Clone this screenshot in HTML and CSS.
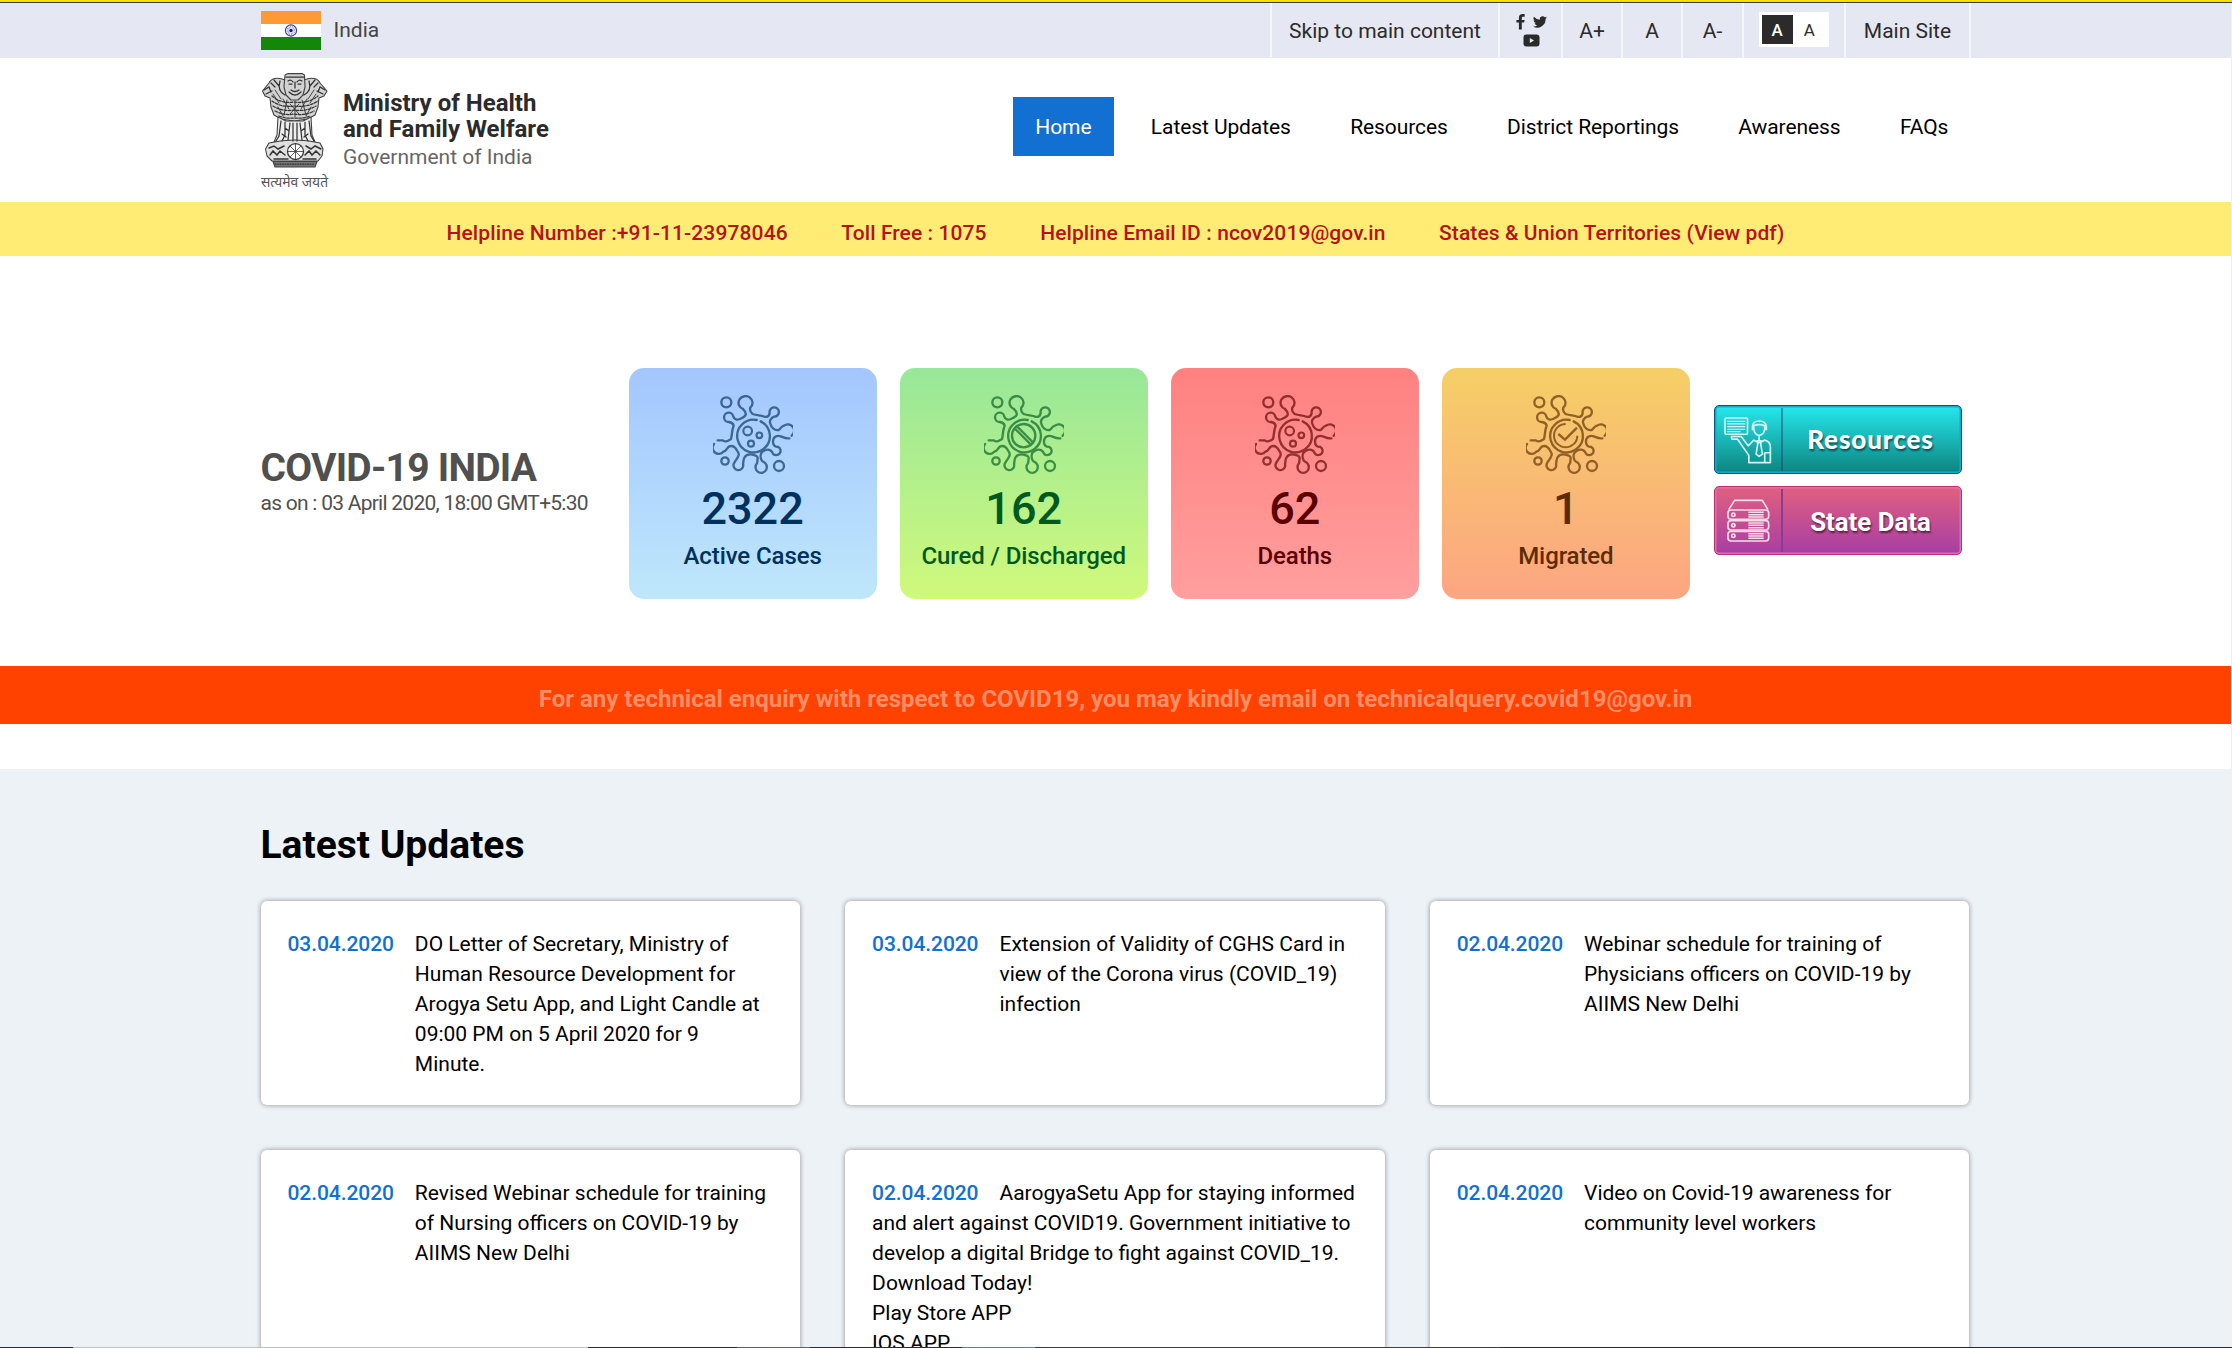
FILE: index.html
```html
<!DOCTYPE html>
<html lang="en">
<head>
<meta charset="utf-8">
<title>Ministry of Health and Family Welfare</title>
<link rel="stylesheet" href="styles.css">
</head>
<body>
<svg class="defs" aria-hidden="true">
  <defs>
    <symbol id="virus" viewBox="39 30 240 240">
      <g fill="none" stroke="currentColor" stroke-width="7" stroke-linecap="round">
        <path d="M129 72A21 20 0 1 1 151 68C148 78 154 84 158 87C172 92 184 90 193 95C202 98 208 92 209 84A14 14 0 1 1 223 95C214 98 207 106 211 116C214 128 224 138 236 135C242 132 241 125 252 122A18 18 0 0 1 275 152"/>
        <path d="M268 160C258 162 250 157 243 154C230 150 218 156 219 172C220 182 228 186 235 186A13 13 0 1 1 219 206C214 192 202 192 192 197C180 203 180 216 185 226C188 231 193 231 196 235A17 17 0 1 1 171 235C173 224 176 213 165 211C150 206 138 208 133 218C129 226 131 231 129 237A14.500 14.500 0 1 1 103 233C109 222 123 210 112 198C106 186 98 181 88 184C80 188 82 197 70 200A18 18 0 0 1 42 177"/>
        <path d="M53 166H68C75 174 84 167 93 162C97 148 95 135 101 122C99 113 93 112 87 111A14 14 0 1 1 100 95C103 104 111 106 120 102C132 97 141 91 136 82C135 77 131 76 129 72"/>
        <circle cx="79" cy="52" r="15"/><circle cx="75" cy="228" r="11"/><circle cx="237" cy="243" r="15"/>
        <path d="M170 105A49 49 0 1 0 182 109"/>
      </g>
    </symbol>
  </defs>
</svg>

<div class="strip"></div>
<div class="page">
  <div class="topbar">
    <div class="container topbar-row">
      <div class="country">
        <svg class="flag" viewBox="0 0 60 39">
          <rect width="60" height="39" fill="#fff"/><rect width="60" height="13" fill="#ff9933"/><rect y="26" width="60" height="13" fill="#138808"/>
          <circle cx="30" cy="19.500" r="5.600" fill="none" stroke="#3c3c9c" stroke-width="1.100"/>
          <circle cx="30" cy="19.500" r="3.400" fill="none" stroke="#8a8ac6" stroke-width="2.400" stroke-dasharray=".7 .8"/>
          <circle cx="30" cy="19.500" r="1.700" fill="#15157c"/>
        </svg>
        <span>India</span>
      </div>
      <div class="tools">
        <a>Skip to main content</a>
        <div class="social">
          <svg width="9" height="16" viewBox="0 0 9 16"><path fill="#2b2b2b" d="M8.700.3v2.500H7.200c-1.200 0-1.400.6-1.400 1.400v1.700h2.800l-.4 2.600H5.800V15.500H2.900V8.500H.4V5.900h2.500V3.800C2.900 1.400 4.400.1 6.600.1c1 0 1.800.1 2.100.2z"/></svg>
          <svg width="14" height="12" viewBox="0 0 24 20"><path fill="#2b2b2b" d="M24 2.400a10 10 0 0 1-2.800.8A5 5 0 0 0 23.300.5a10 10 0 0 1-3.100 1.200A4.900 4.900 0 0 0 11.800 6.200 14 14 0 0 1 1.700 1a4.900 4.900 0 0 0 1.500 6.600A5 5 0 0 1 1 7v.1a4.900 4.900 0 0 0 3.900 4.800 5 5 0 0 1-2.200.1 4.900 4.900 0 0 0 4.600 3.400A10 10 0 0 1 0 17.500 14 14 0 0 0 21.500 5z"/></svg>
          <svg width="17" height="13" viewBox="0 0 17 13"><rect x=".5" y=".5" width="16" height="12" rx="3" fill="#2b2b2b"/><path d="M6.800 4v5l4.200-2.500z" fill="#e5e7f3"/></svg>
        </div>
        <a>A+</a><a>A</a><a>A-</a>
        <div class="contrast"><span class="swatches"><b>A</b><i>A</i></span></div>
        <a>Main Site</a>
      </div>
    </div>
  </div>

  <header class="container header">
    <div class="brand">
      <svg class="emblem" viewBox="0 0 67 114">
        <g fill="#d2d2d2" stroke="#404040" stroke-width="1.100" stroke-linejoin="round">
          <path d="M24 7C17 4 10 5 8 10L1.500 18L4 23L9 25L10 34L13 42L20 46L33 48L47 46L54 42L57 34L58 25L63 23L66 18L59 10C57 5 50 4 43 7Z"/>
          <path fill="#eee" d="M17 44L16 62L13 69H54L51 62L50 44L42 48H25Z"/>
          <path d="M24 2L27 .6H41L43.500 2L44 14L42 22L37 27H30L25 22L23 14Z"/>
          <path fill="#e0e0e0" d="M8 70Q34 64 59 70L62 76L61 83L57 88H11L6 83L4.500 76Z"/>
          <path fill="#777" d="M12 88.500H56L54 94H14Z"/>
        </g>
        <g fill="none" stroke="#333" stroke-width="1.250" stroke-linecap="round">
          <path d="M25 4H43M27 8Q30 6 32 9M36 9Q38 6 41 8M28 11H31M37 11H40M34 9V15M30 17Q34 20 38 17M28 19Q34 25 40 19M31 21Q34 23 37 21"/>
          <path d="M3 17L8 14L10 19M5 21L11 18M10 10L14 14M13 7L18 13M64 17L59 14L57 19M62 21L56 18M57 10L53 14M54 7L49 13M19 8Q16 18 24 22M48 8Q51 18 43 22"/>
          <path stroke-dasharray="2.500 1.500" d="M11 23Q20 31 33 29Q47 31 57 23M11 28Q21 35 33 33Q46 35 57 28M12 33Q22 39 33 37Q45 39 55 33M14 38Q24 43 33 41Q44 43 53 38M18 43Q26 46 33 45Q42 46 49 43"/>
          <path stroke-width=".9" d="M14 17L20 26M12 21L18 30M22 26L28 36M26 27L23 42M34 28V44M41 27L45 42M46 26L40 36M53 17L47 26M55 21L49 30M17 34L22 43M50 34L45 43M29 31L38 41M38 31L29 41"/>
          <path d="M20 48L18 63L15 68M24 49V62L21 68M29 50L27 67M32 50V68M36 50V68M39 50L41 67M44 49V62L47 68M48 48L50 63L53 68M24 55L28 58M40 58L44 55M21 61L25 64M43 64L47 61"/>
          <circle cx="34.500" cy="78.500" r="8" fill="#fff"/>
          <path stroke-width=".8" d="M34.500 71V86M27 78.500H42M29.200 73.200L39.800 83.800M29.200 83.800L39.800 73.200"/>
          <path stroke-width="1.500" d="M8 75L13 73L17 76L23 73M9 82L12 78L16 82L19 78L24 82M45 73L50 76L54 73L60 76M44 82L48 78L51 82L55 78L59 82M13 86H27M42 86H55"/>
          <path stroke-dasharray="1 1.500" d="M14 91H54"/>
        </g>
        <text x="0" y="113.500" textLength="67" lengthAdjust="spacingAndGlyphs" class="motto">सत्यमेव जयते</text>
      </svg>
      <div class="brand-text">
        <strong>Ministry of Health</strong>
        <strong>and Family Welfare</strong>
        <span>Government of India</span>
      </div>
    </div>
    <nav class="nav">
      <a class="active">Home</a><a>Latest Updates</a><a>Resources</a><a>District Reportings</a><a>Awareness</a><a>FAQs</a>
    </nav>
  </header>

  <div class="helpline">
    <span>Helpline Number :+91-11-23978046</span>
    <span>Toll Free : 1075</span>
    <span>Helpline Email ID : ncov2019@gov.in</span>
    <span>States &amp; Union Territories (View pdf)</span>
  </div>

  <section class="container stats">
    <div class="stats-title">
      <h1>COVID-19 INDIA</h1>
      <p>as on : 03 April 2020, 18:00 GMT+5:30</p>
    </div>
    <div class="stat blue">
      <svg class="virus" viewBox="39 30 240 240"><use href="#virus" x="39" y="30" width="240" height="240"/><g fill="none" stroke="currentColor" stroke-width="6.500"><circle cx="143" cy="138" r="13"/><circle cx="178" cy="151" r="8.500"/><circle cx="153" cy="176" r="9"/></g></svg>
      <strong>2322</strong><span>Active Cases</span>
    </div>
    <div class="stat green">
      <svg class="virus" viewBox="39 30 240 240"><use href="#virus" x="39" y="30" width="240" height="240"/><g fill="none" stroke="currentColor" stroke-width="7"><circle cx="158" cy="152" r="35"/><path d="M130 129L179 178M137 123L185 171"/></g></svg>
      <strong>162</strong><span>Cured / Discharged</span>
    </div>
    <div class="stat red">
      <svg class="virus" viewBox="39 30 240 240"><use href="#virus" x="39" y="30" width="240" height="240"/><g fill="none" stroke="currentColor" stroke-width="6.500"><circle cx="143" cy="138" r="13"/><circle cx="178" cy="151" r="8.500"/><circle cx="153" cy="176" r="9"/></g></svg>
      <strong>62</strong><span>Deaths</span>
    </div>
    <div class="stat orange">
      <svg class="virus" viewBox="39 30 240 240"><use href="#virus" x="39" y="30" width="240" height="240"/><g fill="none" stroke="currentColor" stroke-width="6"><path d="M158 117A35 35 0 1 0 193 152"/><path d="M136 147L156 164L192 128" stroke-width="7"/></g></svg>
      <strong>1</strong><span>Migrated</span>
    </div>
    <div class="links">
      <a class="link teal">
        <span class="link-icon"><svg width="48" height="48" viewBox="100 75 145 145"><g fill="none" stroke="#d3f6f6" stroke-width="5" stroke-linejoin="round"><rect x="103" y="81" width="68" height="49" rx="3"/><path d="M110 91H164M110 99H164M110 107H164M110 115H164M110 122H150" stroke-width="3.500"/><path d="M122 137H152L173 165L190 148L206 156L222 148Q240 152 240 168V216H175V194L141 145H124Z"/><path d="M190 104V114Q192 132 206 134Q221 132 223 114V104Q206 98 190 104ZM186 118V106Q187 90 206 90Q226 90 228 106V118M206 134V150M200 150H213L211 160L216 190L206 197L197 190L202 160ZM222 186H240M223 187V216"/></g></svg></span>
        <span class="link-label res">Resources</span>
      </a>
      <a class="link pink">
        <span class="link-icon"><svg width="44" height="44" viewBox="107 328 132 132"><g fill="none" stroke="#f7dce9" stroke-width="5" stroke-linejoin="round"><path d="M115 360L133 332H216L233 360"/><rect x="113" y="361" width="122" height="28" rx="9"/><rect x="113" y="393" width="122" height="28" rx="9"/><rect x="113" y="425" width="122" height="29" rx="9"/><circle cx="129" cy="375" r="5"/><circle cx="129" cy="407" r="5"/><circle cx="129" cy="438" r="5"/><path stroke-width="4.500" d="M174 368H220M174 375H220M174 382H220M174 400H220M174 407H220M174 414H220M174 432H220M174 439H220M174 446H220"/></g></svg></span>
        <span class="link-label">State Data</span>
      </a>
    </div>
  </section>

  <div class="notice">For any technical enquiry with respect to COVID19, you may kindly email on technicalquery.covid19@gov.in</div>

  <section class="updates">
    <div class="container">
      <h2>Latest Updates</h2>
      <div class="cards">
        <article class="card"><time>03.04.2020</time><p>DO Letter of Secretary, Ministry of Human Resource Development for Arogya Setu App, and Light Candle at 09:00 PM on 5 April 2020 for 9 Minute.</p></article>
        <article class="card"><time>03.04.2020</time><p>Extension of Validity of CGHS Card in view of the Corona virus (COVID_19) infection</p></article>
        <article class="card"><time>02.04.2020</time><p>Webinar schedule for training of Physicians officers on COVID-19 by AIIMS New Delhi</p></article>
        <article class="card"><time>02.04.2020</time><p>Revised Webinar schedule for training of Nursing officers on COVID-19 by AIIMS New Delhi</p></article>
        <article class="card inline"><time>02.04.2020</time>AarogyaSetu App for staying informed and alert against COVID19. Government initiative to develop a digital Bridge to fight against COVID_19. Download Today!<br>Play Store APP<br>IOS APP</article>
        <article class="card"><time>02.04.2020</time><p>Video on Covid-19 awareness for community level workers</p></article>
      </div>
    </div>
  </section>
</div>
<div class="taskbar-edge"></div>
</body>
</html>
```
FILE: styles.css
```css
* { box-sizing: border-box; }
html, body { margin: 0; height: 1348px; overflow: hidden; }
body { background: #fff; color: #000; font: 400 21px/30px Roboto, sans-serif; }
h1, h2, p { margin: 0; }
.defs { display: none; }
.strip { height: 3px; background: #ffdd00; border-bottom: 1px solid #3c4043; }
.page { border-right: 1px solid #f1f1f1; height: 1345px; overflow: hidden; }
.container { width: 1710px; margin: 0 auto; }

.topbar { height: 55px; background: #e5e7f3; }
.topbar-row { display: flex; justify-content: space-between; }
.country { display: flex; gap: 13px; padding-top: 8px; color: #444; line-height: 38px; }
.flag { width: 60px; height: 39px; }
.tools { display: grid; grid-template-columns: 228px 63px 60px 60px 61px 102px 125px; height: 54px; border-left: 2px solid #f6f7fb; color: #2b2b2b; line-height: 56px; text-align: center; }
.tools > * { border-right: 2px solid #f6f7fb; }
.tools > a { padding-left: 1px; }
.social { display: flex; flex-wrap: wrap; justify-content: center; align-content: flex-start; align-items: center; column-gap: 8px; row-gap: 4px; padding: 11px 13px 0 15px; }
.social svg { flex: none; }
.contrast { padding: 9px 14px 0 15px; }
.swatches { display: flex; width: 70px; height: 35px; padding: 3px; background: #fff; font-size: 17px; line-height: 31px; }
.swatches b { width: 32px; height: 29px; background: #2b2b2b; color: #fff; font-weight: 500; }
.swatches i { width: 33px; font-style: normal; }

.header { display: flex; justify-content: space-between; align-items: flex-start; height: 144px; }
.brand { display: flex; gap: 15.5px; padding-top: 15px; }
.emblem { width: 67px; height: 114px; overflow: visible; }
.motto { font: 15px "Noto Sans Devanagari", "Noto Sans", sans-serif; fill: #555; }
.brand-text { display: flex; flex-direction: column; padding-top: 17px; color: #2b2b2b; }
.brand-text strong { font-size: 24px; line-height: 26px; font-weight: 700; }
.brand-text span { margin-top: 2px; line-height: 26px; color: #666; }
.nav { display: flex; gap: 15px; margin-top: 39px; line-height: 60px; letter-spacing: -.09px; }
.nav a { height: 59px; padding: 0 22.2px; }
.nav .active { background: #1170d2; color: #fff; }

.helpline { display: flex; justify-content: center; gap: 53.5px; height: 54px; padding-top: 8px; background: #ffec75; color: #b5121b; font-weight: 500; line-height: 46px; letter-spacing: .09px; }
.helpline span:first-child { letter-spacing: .12px; }

.stats { display: grid; grid-template-columns: 345px repeat(5, 248px); column-gap: 23.1px; height: 410px; padding-top: 112px; align-items: start; }
.stats-title { padding-top: 78px; color: #50504e; white-space: nowrap; }
.stats-title h1 { font-size: 39px; line-height: 45px; font-weight: 700; letter-spacing: -.75px; }
.stats-title p { line-height: 24px; letter-spacing: -.74px; }
.stat { display: flex; flex-direction: column; align-items: center; height: 231px; padding-top: 27px; border-radius: 15px; }
.virus { width: 80px; height: 80px; opacity: .65; }
.stat strong { margin-top: 6px; font-size: 45px; line-height: 55px; font-weight: 500; }
.stat span { margin-top: 5px; font-size: 24px; line-height: 30px; font-weight: 500; white-space: nowrap; letter-spacing: -.1px; }
.blue { background: linear-gradient(#a4c6ff, #bee7fb); color: #00305c; }
.green { background: linear-gradient(#97e79a, #d0f97b); color: #005a20; }
.red { background: linear-gradient(#ff8180, #ff9f9e); color: #5a0000; }
.orange { background: linear-gradient(#f5cf66, #fda582); color: #5c2c00; }

.links { display: flex; flex-direction: column; gap: 12px; margin: 0 -1px 0 1px; padding-top: 37px; }
.link { display: flex; height: 69px; border-radius: 5px; border: 1px solid; color: #fff; font-weight: 700; font-size: 25.8px; text-shadow: 1px 2px 2px rgba(0, 0, 0, .55); }
.teal { background: linear-gradient(#25e8ed, #0d847f); border-color: #14507c; box-shadow: inset 0 0 0 1.5px #16a9c6; }
.pink { background: linear-gradient(#e0607e, #a73ea4); border-color: #c22f60; box-shadow: inset 0 0 0 1.5px #cd73b8; }
.link-icon { display: flex; align-items: center; justify-content: center; width: 68px; margin: 2px 0; border-right: 2px solid rgba(40, 60, 110, .45); }
.link-label { flex: 1; text-align: center; line-height: 70px; padding-right: 3px; }
.pink .link-icon { border-color: #8b3a98; }
.res { font-family: Lato, sans-serif; font-weight: 900; font-size: 26px; letter-spacing: .9px; line-height: 67px; }

.notice { height: 58px; padding-top: 8px; background: #ff4200; color: #ff8e66; font-size: 24px; font-weight: 700; line-height: 51px; text-align: center; }

.updates { margin-top: 45px; height: 580px; padding-top: 51px; background: #edf2f6; }
.updates h2 { margin-bottom: 31px; font-size: 39px; line-height: 50px; font-weight: 700; }
.cards { display: grid; grid-template-columns: repeat(3, 539.6px); gap: 45px; }
.card { display: flex; gap: 21px; min-height: 204px; padding: 28px 26px 26px 27px; background: #fff; border-radius: 6px; box-shadow: 0 0 5px rgba(0, 0, 0, .42); }
.card time { flex: none; color: #1170d2; font-weight: 500; letter-spacing: -.08px; }
.inline { display: block; }
.inline time { margin-right: 21px; }

.taskbar-edge { position: fixed; left: 0; right: 0; bottom: 0; height: 1px; background: linear-gradient(90deg, #2a2a28 73px, #bdbfc0 73px 588px, #2c2c2a 588px 737px, #7a5a48 737px 810px, #2c2c2a 810px 962px, #ae6a30 962px 1035px, #3b4230 1035px 1500px, #2a2a28 1500px); }
```
